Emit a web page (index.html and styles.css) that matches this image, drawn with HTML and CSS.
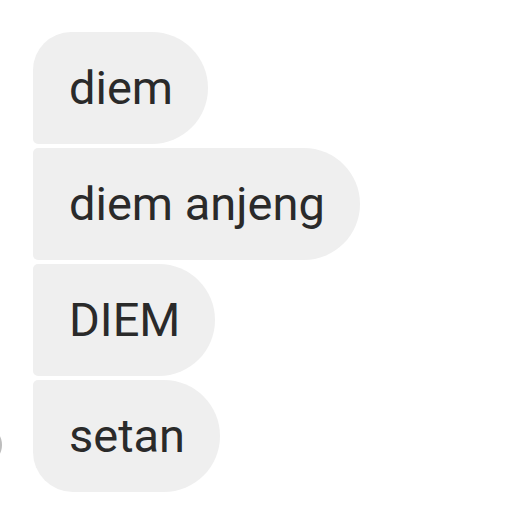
FILE: index.html
```html
<!DOCTYPE html>
<html>
<head>
<meta charset="utf-8">
<link rel="stylesheet" href="styles.css">
</head>
<body>
<div class="thread">
  <div class="avatar"></div>
  <div class="group">
    <div class="bubble first">diem</div>
    <div class="bubble">diem anjeng</div>
    <div class="bubble">DIEM</div>
    <div class="bubble last">setan</div>
  </div>
</div>
</body>
</html>
```
FILE: styles.css
```css
html, body {
  margin: 0;
  padding: 0;
  background: #ffffff;
}
body {
  width: 512px;
  height: 512px;
  overflow: hidden;
  font-family: Roboto, "Liberation Sans", sans-serif;
}
.thread {
  position: relative;
  padding: 32px 0 0 33px;
}
.avatar {
  position: absolute;
  left: -38px;
  top: 425px;
  width: 40px;
  height: 40px;
  border-radius: 50%;
  background: #f4f4f4;
  border: 2px solid #bdbdbd;
  box-sizing: border-box;
  filter: blur(0.6px);
}
.group {
  display: flex;
  flex-direction: column;
  align-items: flex-start;
  gap: 4px;
}
.bubble {
  background: #efefef;
  color: #2a2a2a;
  font-size: 47px;
  line-height: 112px;
  height: 112px;
  padding: 0 35px 0 36px;
  border-radius: 5px 56px 56px 5px;
  white-space: nowrap;
}
.bubble.first {
  border-top-left-radius: 38px;
}
.bubble.last {
  border-bottom-left-radius: 40px;
}
```
